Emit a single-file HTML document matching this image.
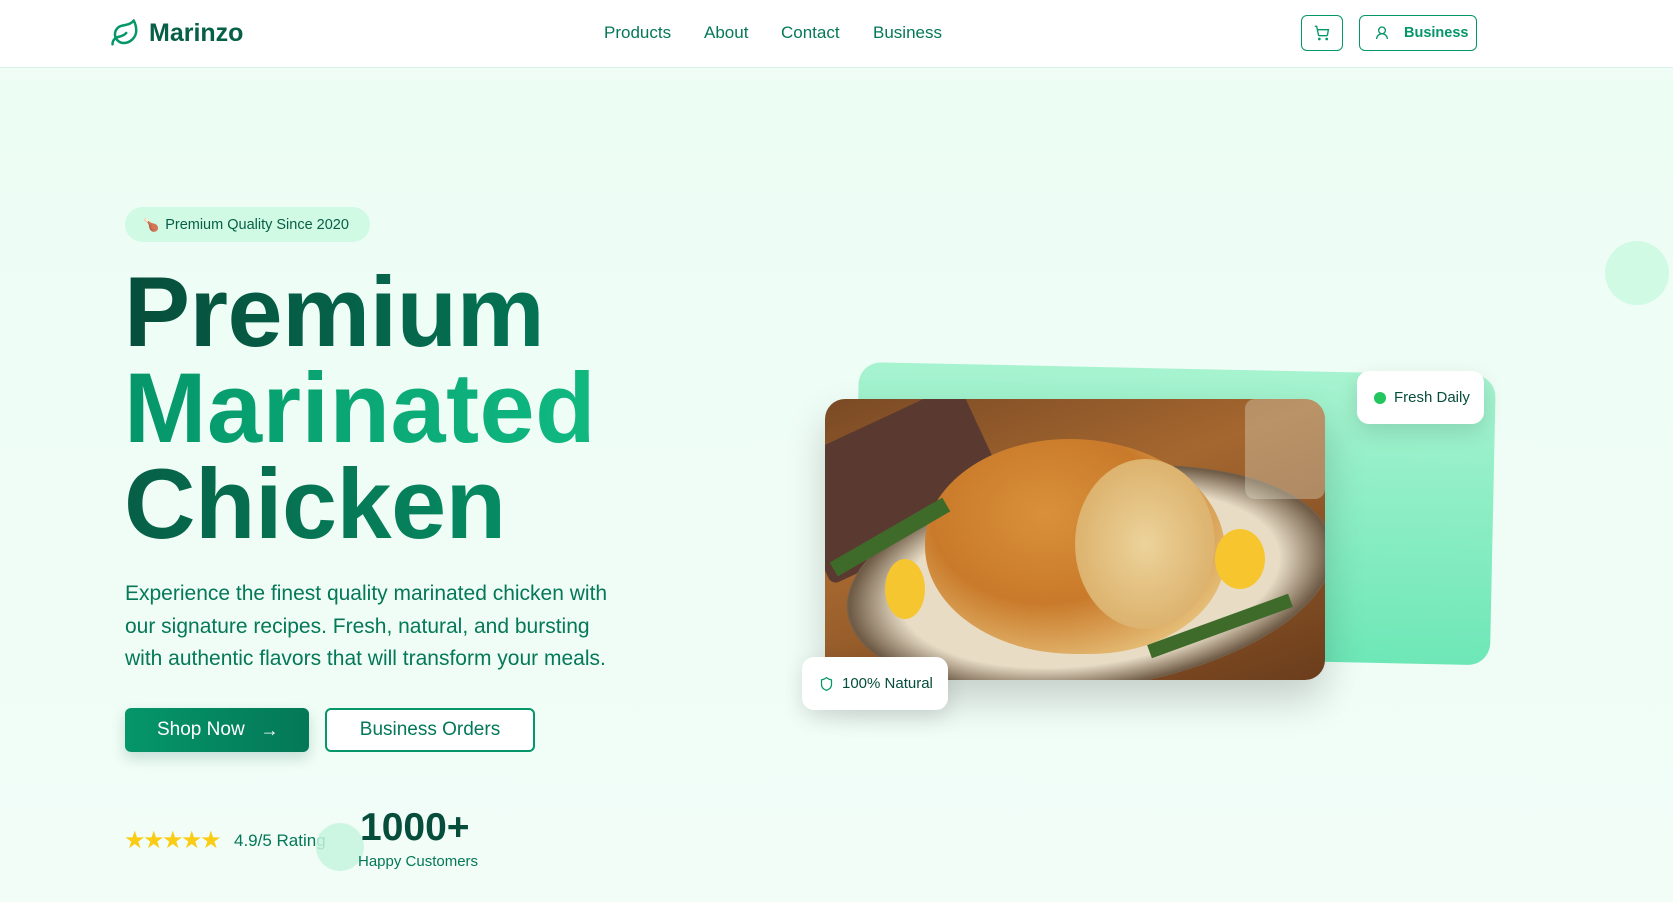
<!DOCTYPE html>
<html><head><meta charset="utf-8"><style>
*{margin:0;padding:0;box-sizing:border-box}
body{width:1673px;height:902px;overflow:hidden;font-family:"Liberation Sans",sans-serif;background:#f0fdf6;position:relative}
.hdr{position:absolute;left:0;top:0;width:1673px;height:68px;background:#fff;border-bottom:1px solid #d9f3ea}
.logo{position:absolute;left:110px;top:18px;display:flex;align-items:center;gap:9px;font-weight:bold;font-size:25px;color:#065f46}
.nav{position:absolute;top:23px;font-size:17px;color:#047857}
.btn1{position:absolute;left:1301px;top:15px;width:42px;height:36px;border:1.5px solid #059669;border-radius:6px;display:flex;align-items:center;justify-content:center}
.btn2{position:absolute;left:1359px;top:15px;width:118px;height:36px;border:1.5px solid #059669;border-radius:6px;font-size:14.5px;color:#059669;font-weight:bold;display:flex;align-items:center;padding-left:14px;gap:14px}
.hero{position:absolute;left:0;top:79px;width:1673px;height:823px;background:linear-gradient(180deg,#ecfdf4,#f2fdf8)}
.badge{position:absolute;left:125px;top:207px;width:245px;height:35px;border-radius:18px;background:#d1fae5;font-size:14.5px;color:#065f46;display:flex;align-items:center;padding-left:18px;gap:6px}
h1{position:absolute;left:124px;top:264px;font-size:99px;line-height:96px;font-weight:bold;letter-spacing:-0.5px}
.l1{background:linear-gradient(90deg,#064e3b,#047857);-webkit-background-clip:text;color:transparent}
.l2{background:linear-gradient(90deg,#059669,#10b981);-webkit-background-clip:text;color:transparent;letter-spacing:0.5px}
.l3{background:linear-gradient(90deg,#065f46,#059669);-webkit-background-clip:text;color:transparent}
p.d{position:absolute;left:125px;top:578px;width:505px;font-size:21px;line-height:32.5px;color:#047857}
.shop{position:absolute;left:125px;top:708px;width:184px;height:44px;border-radius:6px;background:linear-gradient(90deg,#059669,#047857);color:#fff;font-size:19px;display:flex;align-items:center;padding-left:32px;gap:16px;box-shadow:0 6px 14px rgba(6,95,70,.2)}
.bo{position:absolute;left:325px;top:708px;width:210px;height:44px;border-radius:6px;border:2px solid #059669;background:#fff;color:#047857;font-size:19px;display:flex;align-items:center;justify-content:center}
.card{position:absolute;background:#fff;border-radius:12px;box-shadow:0 8px 22px rgba(0,0,0,.12);display:flex;align-items:center;font-size:15px;color:#064e3b}
</style></head><body>
<div class="hdr">
 <div class="logo"><svg width="30" height="30" viewBox="0 0 24 24" fill="none" stroke="#059669" stroke-width="2" stroke-linecap="round" stroke-linejoin="round"><path d="M11 20A7 7 0 0 1 9.8 6.1C15.5 5 17 4.48 19 2c1 2 2 4.18 2 8 0 5.5-4.78 10-10 10Z"/><path d="M2 21c0-3 1.850-5.36 5.08-6C9.5 14.52 12 13 13 12"/></svg>Marinzo</div>
 <div class="nav" style="left:604px">Products</div>
 <div class="nav" style="left:704px">About</div>
 <div class="nav" style="left:781px">Contact</div>
 <div class="nav" style="left:873px">Business</div>
 <div class="btn1"><svg width="16" height="16" viewBox="0 0 24 24" fill="none" stroke="#059669" stroke-width="2" stroke-linecap="round"><circle cx="8" cy="21" r="1"/><circle cx="19" cy="21" r="1"/><path d="M2 2h2l2.6 12.4a2 2 0 0 0 2 1.6h9.7a2 2 0 0 0 2-1.6L21.6 7H5.1"/></svg></div>
 <div class="btn2"><svg width="16" height="16" viewBox="0 0 24 24" fill="none" stroke="#059669" stroke-width="2"><circle cx="12" cy="8" r="5"/><path d="M20 21a8 8 0 0 0-16 0"/></svg>Business</div>
</div>
<div class="hero"></div>
<div style="position:absolute;left:1605px;top:241px;width:64px;height:64px;border-radius:50%;background:#d1fae5"></div>
<div class="badge"><span style="font-size:13px">🍗</span>Premium Quality Since 2020</div>
<h1><div class="l1">Premium</div><div class="l2">Marinated</div><div class="l3">Chicken</div></h1>
<p class="d">Experience the finest quality marinated chicken with our signature recipes. Fresh, natural, and bursting with authentic flavors that will transform your meals.</p>
<div class="shop">Shop Now <span style="font-size:18px">→</span></div>
<div class="bo">Business Orders</div>
<div style="position:absolute;left:124px;top:826px;color:#facc15;font-size:24px;letter-spacing:-2.5px">★★★★★</div>
<div style="position:absolute;left:234px;top:831px;font-size:17px;color:#047857">4.9/5 Rating</div>
<div style="position:absolute;left:316px;top:823px;width:48px;height:48px;border-radius:50%;background:#c6f4dd;opacity:.85"></div>
<div style="position:absolute;left:360px;top:806px;font-size:39px;font-weight:bold;color:#064e3b">1000+</div>
<div style="position:absolute;left:358px;top:853px;font-size:15px;color:#047857">Happy Customers</div>

<div style="position:absolute;left:859px;top:362px;width:637px;height:290px;border-radius:22px;background:linear-gradient(180deg,#a7f3d0,#6ee7b7);transform:rotate(1.2deg);transform-origin:0 0"></div>
<div style="position:absolute;left:825px;top:399px;width:500px;height:281px;border-radius:20px;overflow:hidden;box-shadow:0 20px 40px rgba(0,0,0,.18);background:linear-gradient(160deg,#7a4a25,#a5672f 40%,#6b3d1c)">
 <div style="position:absolute;left:-30px;top:20px;width:200px;height:130px;background:#5a3a30;transform:rotate(-25deg);border-radius:8px"></div>
 <div style="position:absolute;left:20px;top:70px;width:490px;height:220px;border-radius:50%;background:radial-gradient(ellipse,#e8dcc5 55%,#6e5a45 70%,#e5ddd0 80%);transform:rotate(-8deg)"></div>
 <div style="position:absolute;left:100px;top:40px;width:300px;height:215px;border-radius:48% 52% 45% 50%;background:radial-gradient(ellipse at 40% 35%,#d9903a,#c97a2a 45%,#e6c07a 80%)"></div>
 <div style="position:absolute;left:250px;top:60px;width:140px;height:170px;border-radius:50%;background:radial-gradient(ellipse,#ecd39a,#d6a55c)"></div>
 <div style="position:absolute;left:390px;top:130px;width:50px;height:60px;border-radius:50%;background:#f7c62f"></div>
 <div style="position:absolute;left:60px;top:160px;width:40px;height:60px;border-radius:50%;background:#f5c630"></div>
 <div style="position:absolute;left:0;top:130px;width:130px;height:16px;background:#3f6b2a;transform:rotate(-30deg)"></div>
 <div style="position:absolute;left:320px;top:220px;width:150px;height:14px;background:#3f6b2a;transform:rotate(-20deg)"></div>
 <div style="position:absolute;left:420px;top:0;width:80px;height:100px;background:rgba(230,230,210,.35);border-radius:10px"></div>
</div>
<div class="card" style="left:1357px;top:371px;width:127px;height:53px;padding-left:17px;gap:8px"><span style="width:12px;height:12px;border-radius:50%;background:#22c55e"></span>Fresh Daily</div>
<div class="card" style="left:802px;top:657px;width:146px;height:53px;padding-left:17px;gap:8px"><svg width="15" height="16" viewBox="0 0 24 24" fill="none" stroke="#059669" stroke-width="2"><path d="M20 13c0 5-3.5 7.5-7.7 9a1 1 0 0 1-.7 0C7.5 20.5 4 18 4 13V6a1 1 0 0 1 1-1c2 0 4.5-1.2 6.2-2.7a1.2 1.2 0 0 1 1.6 0C14.5 3.8 17 5 19 5a1 1 0 0 1 1 1z"/></svg>100% Natural</div>
</body></html>
